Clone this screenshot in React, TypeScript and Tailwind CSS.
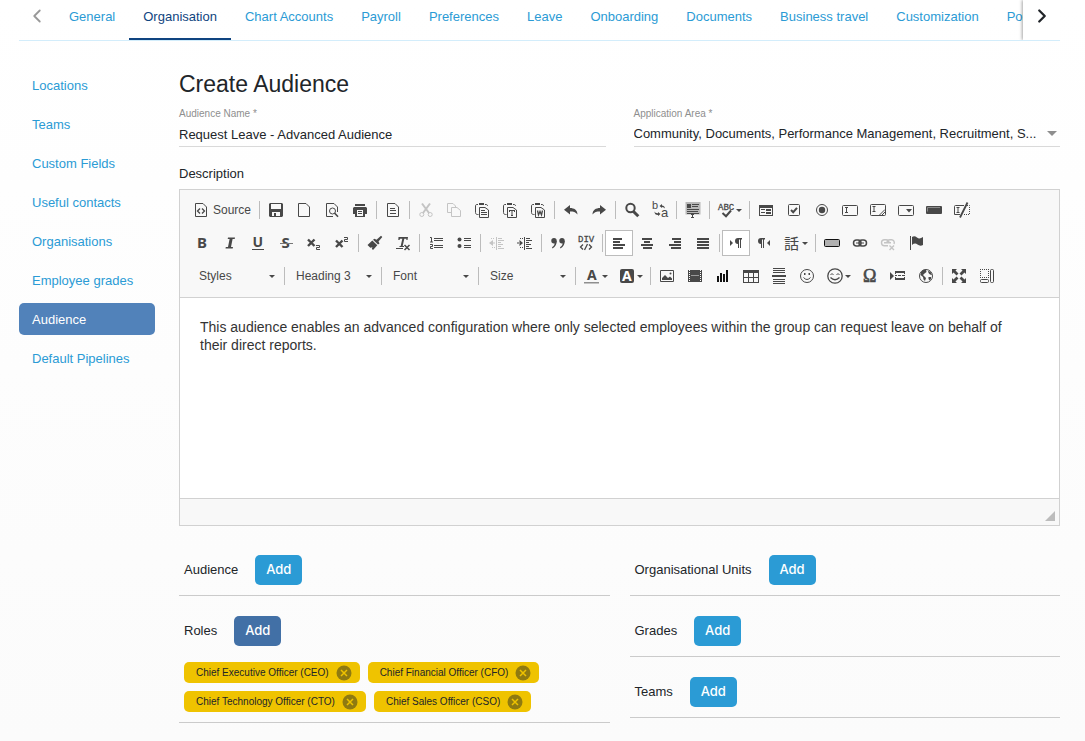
import React from 'react';
import { ChevronLeft, ChevronRight } from 'lucide-react';

const tabs = [
  'General',
  'Organisation',
  'Chart Accounts',
  'Payroll',
  'Preferences',
  'Leave',
  'Onboarding',
  'Documents',
  'Business travel',
  'Customization',
  'Policies',
];

const sideLinks = [
  'Locations',
  'Teams',
  'Custom Fields',
  'Useful contacts',
  'Organisations',
  'Employee grades',
  'Audience',
  'Default Pipelines',
];

const roles = [
  'Chief Executive Officer (CEO)',
  'Chief Financial Officer (CFO)',
  'Chief Technology Officer (CTO)',
  'Chief Sales Officer (CSO)',
];

const Page = () => <path d="M2.5 1.5H10L13.5 5V14.5H2.5Z" fill="none" stroke="currentColor" />;

const Clipboard = ({ children }: { children: React.ReactNode }) => (
  <>
    <path d="M4.5 12.5H3.5C2.5 12.5 1.5 12 1.5 10.5V4C1.5 3 2 2.5 3 2.5H4M11 2.5H12C13 2.5 13.5 3 13.5 4" fill="none" stroke="currentColor" />
    <path d="M5 1h5v2H5z" />
    <path d="M5.5 5.5H11L14.5 8V15.5H5.5Z" fill="none" stroke="currentColor" />
    {children}
  </>
);

const icons: Record<string, React.ReactNode> = {
  Source: (
    <>
      <Page />
      <path d="M7 6.5L4.5 9L7 11.5M9 6.5L11.5 9L9 11.5" fill="none" stroke="currentColor" strokeWidth="1.3" />
    </>
  ),
  Save: <path fillRule="evenodd" d="M2 1H14L15 2V14L14 15H2L1 14V2ZM3 2V7H13V2ZM4 10V14H6V11H8V14H12V10Z" />,
  'New page': <Page />,
  Preview: (
    <>
      <path d="M9 14.5H2.5V1.5H10L13.5 5V10" fill="none" stroke="currentColor" />
      <circle cx="8.5" cy="9" r="3" fill="none" stroke="currentColor" />
      <path d="M10.5 11L14 14.8" stroke="currentColor" strokeWidth="1.6" />
    </>
  ),
  Print: (
    <path fillRule="evenodd" d="M3 2H13V4H3ZM2 5H14L15 6V12H13V15H3V12H1V6ZM5 8V14H11V8ZM6 9H10V10H6ZM6 11H10V12H6Z" />
  ),
  Templates: (
    <>
      <Page />
      <path d="M5 6h5v1H5zM5 8h6v1H5zM5 11h6v1H5z" />
    </>
  ),
  Cut: (
    <g fill="none" stroke="currentColor">
      <path d="M4 1.5L11 11M12 1.5L5 11" strokeWidth="2" />
      <circle cx="3.8" cy="12.5" r="2" />
      <circle cx="12.2" cy="12.5" r="2" />
    </g>
  ),
  Copy: (
    <g fill="none" stroke="currentColor">
      <path d="M5 10.5H1.5V1.5H7L9.5 4V5" />
      <path d="M5.5 5.5H11L14.5 8.5V14.5H5.5Z" />
    </g>
  ),
  Paste: (
    <Clipboard>
      <path d="M7 8h4v1H7zM7 10h6v1H7zM7 12h6v1H7z" />
    </Clipboard>
  ),
  'Paste as plain text': (
    <Clipboard>
      <path d="M7 8h6v2h-1V9h-1.5v4h.5v1H9v-1h.5V9H8v1H7z" />
    </Clipboard>
  ),
  'Paste from Word': (
    <Clipboard>
      <path d="M7.5 8.5L8.5 13L10 9.5L11.5 13L12.5 8.5" fill="none" stroke="currentColor" strokeWidth="1.3" />
    </Clipboard>
  ),
  Undo: <path d="M7 3V6C11 6 14.5 8 14.5 12.5C12.5 10 10.5 9.5 7 9.5V12.5L1 7.7Z" />,
  Redo: <path d="M9 3V6C5 6 1.5 8 1.5 12.5C3.5 10 5.5 9.5 9 9.5V12.5L15 7.7Z" />,
  Find: (
    <g fill="none" stroke="currentColor">
      <circle cx="6.5" cy="6" r="4.2" strokeWidth="2" />
      <path d="M9.5 9.5L14.3 14.3" strokeWidth="3" />
    </g>
  ),
  Replace: (
    <>
      <text x="0" y="7" fontSize="11">b</text>
      <text x="9" y="15" fontSize="13">a</text>
      <path d="M7.5 4L10 2V3.5Q12.5 3.5 13 6.5Q12 5 10 5V6ZM8.5 12L6 10V11.3Q3 11.5 2.5 9.5Q2.5 13 6 13V14Z" />
    </>
  ),
  'Select all': (
    <>
      <path d="M.5 0H15.5V12.5H.5Z" fill="#b9b9b9" />
      <path d="M2 2h4v4H2zM7 2h7v1H7zM7 4h6v1H7zM2 7h12v1H2zM2 9h11v1H2zM2 11h12v1H2zM7 12h1v3H7zM6 12h3v1H6zM6 15h3v1H6z" />
    </>
  ),
  Spelling: (
    <>
      <text x="0" y="8" fontSize="9" fontFamily="Liberation Mono, monospace" stroke="currentColor" strokeWidth=".3">ABC</text>
      <path d="M4.5 11L8 14.2L13 8.5" fill="none" stroke="currentColor" strokeWidth="2" />
    </>
  ),
  Form: <path fillRule="evenodd" d="M1 3H15V14H1ZM2 6V13H14V6ZM3 7H7V8H3ZM8 7H13V9H8ZM3 10H7V11H3ZM8 10H13V12H8Z" />,
  Checkbox: (
    <>
      <rect x="2.5" y="2.5" width="11" height="11" rx="1" fill="none" stroke="currentColor" />
      <path d="M5 8L7.2 10.2L11 5.8" fill="none" stroke="currentColor" strokeWidth="2" />
    </>
  ),
  'Radio button': (
    <>
      <circle cx="8" cy="8" r="5.5" fill="none" stroke="currentColor" />
      <circle cx="8" cy="8" r="3.2" />
    </>
  ),
  'Text field': (
    <path d="M1.5 3.5Q.5 3.5 .5 4.5V12.5Q.5 13.5 1.5 13.5H14.5Q15.5 13.5 15.5 12.5V4.5Q15.5 3.5 14.5 3.5ZM3 5.5H6M3 10.5H6M4.5 5.5V10.5" fill="none" stroke="currentColor" />
  ),
  Textarea: (
    <path d="M1.5 2.5H14.5Q15.5 2.5 15.5 3.5V12.5Q15.5 13.5 14.5 13.5H1.5Q.5 13.5 .5 12.5V3.5Q.5 2.5 1.5 2.5ZM2.5 4.5H5.5M2.5 9.5H5.5M4 4.5V9.5M9.5 13L15 7.5M12 13L15 10" fill="none" stroke="currentColor" />
  ),
  'Selection field': (
    <>
      <rect x=".5" y="3.5" width="15" height="10" rx="1" fill="none" stroke="currentColor" />
      <path d="M8 7h6l-3 3.5z" />
    </>
  ),
  Button: (
    <>
      <rect x="0" y="4" width="16" height="8" rx="1" />
      <path d="M1.5 9.5V5.5H14" fill="none" stroke="#8a8a8a" />
    </>
  ),
  'Hidden field': (
    <g fill="none" stroke="currentColor">
      <path d="M10 3.5H1.5Q.5 3.5 .5 4.5V12.5H6M2.5 5.5H5.5M2.5 10.5H5.5M4 5.5V10.5" />
      <path d="M13 3.5H15.5V12.5H9" strokeDasharray="1 1" />
      <path d="M13.5 .5L6 15.5" strokeWidth="1.8" />
    </g>
  ),
  Bold: <text x="3" y="13" fontSize="15" fontWeight="700" fontFamily="Noto Sans, sans-serif">B</text>,
  Italic: <path d="M6 2.5H13L12.7 4H10.6L9 12H11L10.7 13.5H3.5L3.8 12H6L7.6 4H5.7Z" />,
  Underline: (
    <>
      <text x="2.5" y="12" fontSize="14" fontWeight="700" fontFamily="Noto Sans, sans-serif">U</text>
      <path d="M2 14h12v1H2z" />
    </>
  ),
  Strikethrough: (
    <>
      <text x="3.5" y="13" fontSize="15" fontWeight="700" fontFamily="Noto Sans, sans-serif">S</text>
      <path d="M2 8h13v1H2z" fill="#777" />
    </>
  ),
  Subscript: (
    <g fill="none" stroke="currentColor">
      <path d="M2 4.5L8.5 11M8.5 4.5L2 11" strokeWidth="2.4" />
      <path d="M10 10.5H13.5V12.5H10.5V14.5H14" />
    </g>
  ),
  Superscript: (
    <g fill="none" stroke="currentColor">
      <path d="M2 5.5L8.5 12M8.5 5.5L2 12" strokeWidth="2.4" />
      <path d="M10 2.5H13.5V4.5H10.5V6.5H14" />
    </g>
  ),
  'Copy formatting': (
    <path d="M14 .8L15.3 2.1L11.5 6.5L12.5 8.5L11 9.5L6 4.8L7.5 3.8L9.5 4.8ZM5.3 5.5L10.3 10.3L6 15L4.8 13.8L5.5 12.3L3.3 12.8L.5 10Z" />
  ),
  'Remove format': (
    <>
      <path d="M3.5 2H13L12.5 5H11.3L11.5 3.7H9.3L7.7 11H9V12H4.5V11H5.7L7.3 3.7H5L4.5 5H3.3Z" />
      <path d="M1 13h7v1H1z" />
      <path d="M9.5 10L14.5 15M14.5 10L9.5 15" fill="none" stroke="currentColor" strokeWidth="1.5" />
    </>
  ),
  'Numbered list': (
    <>
      <path d="M6 3h9v1H6zM6 5h9v1H6zM6 10h9v1H6zM6 12h9v1H6z" />
      <path d="M2 2.5H3.5V7M2 7H5M2 9.5H4.5V11.5H2.5V13.5H5" fill="none" stroke="currentColor" />
    </>
  ),
  'Bulleted list': (
    <>
      <circle cx="3.5" cy="4.5" r="2" />
      <circle cx="3.5" cy="11" r="2" />
      <path d="M8 3h7v1H8zM8 5h7v1H8zM8 10h7v1H8zM8 12h7v1H8z" />
    </>
  ),
  Outdent: (
    <>
      <path d="M7 2h1v13H7zM9 3h4v1H9zM9 5h6v1H9zM9 7h3v1H9zM9 9h5v1H9zM9 11h3v1H9zM9 13h6v1H9zM4 5v6L0 8zM4 7.5h2v1H4z" />
      <path d="M2 3.5H6M3 12.5H6" stroke="currentColor" strokeDasharray="1 1" />
    </>
  ),
  Indent: (
    <>
      <path d="M7 2h1v13H7zM9 3h4v1H9zM9 5h6v1H9zM9 7h3v1H9zM9 9h5v1H9zM9 11h3v1H9zM9 13h6v1H9zM2.5 5v6L6 8zM0 7.5h3v1H0z" />
      <path d="M3 3.5H6M3 12.5H6" stroke="currentColor" strokeDasharray="1 1" />
    </>
  ),
  'Block quote': (
    <>
      <circle cx="4" cy="5.7" r="2.7" />
      <circle cx="12" cy="5.7" r="2.7" />
      <path d="M6.7 5.5Q7 11 2.5 13.5L2 12.3Q5 10.5 4.5 7.5ZM14.7 5.5Q15 11 10.5 13.5L10 12.3Q13 10.5 12.5 7.5Z" />
    </>
  ),
  'Div container': (
    <>
      <text x="0" y="7" fontSize="9" fontFamily="Liberation Mono, monospace" stroke="currentColor" strokeWidth=".3">DIV</text>
      <path d="M5 9.5L2.5 12L5 14.5M11 9.5L13.5 12L11 14.5M9.5 9L6.5 15" fill="none" stroke="currentColor" strokeWidth="1.3" />
    </>
  ),
  'Align left': <path d="M2 3h9v2H2zM2 6h7v2H2zM2 9h12v2H2zM2 12h10v2H2z" />,
  Center: <path d="M3 3h10v2H3zM5 6h6v2H5zM2 9h12v2H2zM4 12h9v2H4z" />,
  'Align right': <path d="M5 3h9v2H5zM7 6h7v2H7zM2 9h12v2H2zM4 12h10v2H4z" />,
  Justify: <path d="M2 3h12v2H2zM2 6h12v2H2zM2 9h12v2H2zM2 12h12v2H2z" />,
  'Left to right': (
    <>
      <path d="M2 5L5 8L2 11Z" />
      <path d="M14 3V4.5H13V13H12V4.5H11V13H10V9Q7 9 7 6Q7 3 10 3Z" />
    </>
  ),
  'Right to left': (
    <>
      <path d="M14 5L11 8L14 11Z" />
      <path d="M9 3V4.5H8V13H7V4.5H6V13H5V9Q2 9 2 6Q2 3 5 3Z" />
    </>
  ),
  Language: <text x="0" y="14" fontSize="15" fontFamily="Noto Sans CJK JP, sans-serif">話</text>,
  'Image button': <rect x=".5" y="4.5" width="15" height="7" rx="1" fill="#b0b0b0" stroke="#111" />,
  Link: (
    <>
      <rect x="1.5" y="5" width="7.5" height="6" rx="3" fill="none" stroke="currentColor" strokeWidth="1.5" />
      <rect x="7" y="5" width="7.5" height="6" rx="3" fill="none" stroke="currentColor" strokeWidth="1.5" />
      <path d="M4 7.5h8v1H4z" />
    </>
  ),
  Unlink: (
    <g fill="none" stroke="currentColor" strokeWidth="1.4">
      <path d="M9 8A3 3 0 0 0 6 4.7H4.5A3 3 0 0 0 4.5 10.7H8M7 7.5A3 3 0 0 1 10 4.7H11.5A3 3 0 0 1 14 9M4 7.7H11" />
      <path d="M9.5 10.5L14 15M14 10.5L9.5 15" />
    </g>
  ),
  Anchor: <path d="M2 1h1v14H2zM4 2Q6.5 .5 9 2.5T15 2V10Q12 11.5 9.5 9.5T4 10Z" />,
  'Text color': (
    <>
      <text x="3" y="12" fontSize="14" fontWeight="700" fontFamily="Noto Sans, sans-serif">A</text>
      <path d="M0 14h15v1.5H0z" fill="#8f8f8f" />
    </>
  ),
  'Background color': (
    <>
      <rect x="1" y="1" width="14" height="14" rx="2" />
      <text x="3" y="13" fontSize="14" fontWeight="700" fill="#fff" fontFamily="Noto Sans, sans-serif">A</text>
    </>
  ),
  Image: (
    <>
      <path d="M1.5 2.5H14.5V13.5H1.5Z" fill="none" stroke="currentColor" />
      <path d="M3 12V10L6 7L9 10L11 8.5L13 10.5V12Z" />
      <circle cx="11.5" cy="5.5" r="1" />
    </>
  ),
  Flash: (
    <>
      <path d="M1 2h14v12H1z" />
      <path d="M2.5 2V14M13.5 2V14" stroke="#fff" strokeDasharray="1 1" />
      <path d="M4 7.5h8" stroke="#999" />
    </>
  ),
  Chart: <path fill="#111" d="M2 8h2v6H2zM5 5h2v9H5zM8 6h2v8H8zM11 2h2v12h-2z" />,
  Table: <path fillRule="evenodd" d="M0 2H16V15H0ZM1 5V9H5V5ZM6 5V9H10V5ZM11 5V9H15V5ZM1 10V14H5V10ZM6 10V14H10V10ZM11 10V14H15V10Z" />,
  'Horizontal line': <path d="M2 0h12v1H2zM2 2h12v1H2zM2 4h12v1H2zM1 7h14v2H1zM2 11h12v1H2zM2 13h12v1H2zM2 15h12v1H2z" />,
  Smiley: (
    <>
      <circle cx="8" cy="8" r="6.5" fill="none" stroke="currentColor" />
      <path d="M5 5h1.5v2H5zM9.5 5H11v2H9.5z" />
      <path d="M4.5 9.5Q8 13.5 11.5 9.5" fill="none" stroke="currentColor" />
    </>
  ),
  Emoji: (
    <g fill="none" stroke="currentColor">
      <circle cx="8" cy="8" r="7.2" strokeWidth="1.3" />
      <path d="M3.5 7L5 5.5L6.5 7M9.5 7L11 5.5L12.5 7" />
      <path d="M3.5 9.5Q8 14 12.5 9.5" strokeWidth="1.3" />
    </g>
  ),
  'Special character': <text x="1" y="14" fontSize="18" fontFamily="Liberation Serif, serif" stroke="currentColor" strokeWidth=".6">Ω</text>,
  'Page break': <path d="M0 4l4 4-4 4zM5 3h10v2H5zM5 7h2v1H5zM8 7h3v1H8zM12 7h3v1h-3zM5 10h10v2H5zM5 3h1v3H5zM14 3h1v3h-1zM5 9h1v2H5zM14 9h1v2h-1z" />,
  IFrame: (
    <>
      <circle cx="8" cy="8" r="6.5" fill="none" stroke="currentColor" />
      <path d="M3 4L5 2L8 1.5L8.5 4L6.5 5.5L5 7L6.5 8.5L8 10L7 13L5.500 11.500L5 9L2.5 7ZM10 2.5L13 4.5L14 7L12 6.5L10.5 5ZM10.500 9L13 9L13 11L11.500 12.500L10.500 11Z" />
    </>
  ),
  Maximize: (
    <>
      <path d="M1 1h5L1 6zM15 1v5l-5-5zM1 15v-5l5 5zM15 15h-5l5-5z" />
      <path d="M2 2L6.5 6.5M14 2L9.5 6.5M2 14L6.5 9.5M14 14L9.5 9.5" stroke="currentColor" strokeWidth="2.8" />
    </>
  ),
  'Show blocks': (
    <g fill="none" stroke="currentColor">
      <path d="M1 1.5H10M1 9.5H10M1.5 1V10M9.5 1V10" strokeDasharray="1 1" />
      <rect x="1.5" y="11.5" width="8" height="3" rx="1" />
      <rect x="11.5" y="1.5" width="3" height="13" rx="1" />
    </g>
  ),
};

const withArrow = ['Spelling', 'Language', 'Text color', 'Background color', 'Emoji'];
const disabled = ['Cut', 'Copy', 'Outdent', 'Unlink'];
const active = ['Align left', 'Left to right'];

const row1 = [
  ['Source'],
  ['Save', 'New page', 'Preview', 'Print'],
  ['Templates'],
  ['Cut', 'Copy', 'Paste', 'Paste as plain text', 'Paste from Word'],
  ['Undo', 'Redo'],
  ['Find', 'Replace'],
  ['Select all'],
  ['Spelling'],
  ['Form', 'Checkbox', 'Radio button', 'Text field', 'Textarea', 'Selection field', 'Button', 'Hidden field'],
];

const row2 = [
  ['Bold', 'Italic', 'Underline', 'Strikethrough', 'Subscript', 'Superscript'],
  ['Copy formatting', 'Remove format'],
  ['Numbered list', 'Bulleted list'],
  ['Outdent', 'Indent'],
  ['Block quote', 'Div container'],
  ['Align left', 'Center', 'Align right', 'Justify'],
  ['Left to right', 'Right to left', 'Language'],
  ['Image button', 'Link', 'Unlink', 'Anchor'],
];

const row3 = [
  ['Text color', 'Background color'],
  ['Image', 'Flash', 'Chart', 'Table', 'Horizontal line', 'Smiley', 'Emoji', 'Special character', 'Page break', 'IFrame'],
  ['Maximize', 'Show blocks'],
];

const Separator = () => <span className="mx-0.5 h-[18px] w-px shrink-0 bg-[#bcbcbc]" />;

const Arrow = () => (
  <svg viewBox="0 0 6 3" className="h-[3px] w-1.5 shrink-0" fill="currentColor">
    <path d="M0 0h6L3 3z" />
  </svg>
);

const ToolButton = ({ name }: { name: string }) => {
  let width = 'w-7 justify-center';
  if (withArrow.includes(name)) width = 'w-[35px] pl-1.5 gap-0.5';
  if (name === 'Source') width = 'w-[69px] pl-[5px] gap-1';
  return (
    <button
      type="button"
      aria-label={name}
      disabled={disabled.includes(name)}
      className={`flex h-[26px] shrink-0 items-center text-xs text-[#484848] disabled:text-[#c4c4c4] ${width} ${
        active.includes(name) ? 'bg-white outline-1 -outline-offset-1 outline-[#bcbcbc]' : ''
      }`}
    >
      <svg viewBox="0 0 16 16" className="size-4 shrink-0 overflow-visible" fill="currentColor">
        {icons[name]}
      </svg>
      {name === 'Source' && <span>Source</span>}
      {withArrow.includes(name) && <Arrow />}
    </button>
  );
};

const Groups = ({ groups }: { groups: string[][] }) => (
  <>
    {groups.map((group, i) => (
      <React.Fragment key={group[0]}>
        {i > 0 && <Separator />}
        {group.map((name) => (
          <ToolButton key={name} name={name} />
        ))}
      </React.Fragment>
    ))}
  </>
);

const Combo = ({ label }: { label: string }) => (
  <>
    <div className="relative w-[92px] shrink-0">
      <select aria-label={label} className="h-[26px] w-full appearance-none pl-[9px] text-xs text-[#484848] outline-none">
        <option>{label}</option>
      </select>
      <span className="pointer-events-none absolute inset-y-0 right-[7px] flex items-center text-[#484848]">
        <Arrow />
      </span>
    </div>
    <Separator />
  </>
);

const Editor = () => (
  <div className="border border-[#d1d1d1] bg-white">
    <div className="flex flex-col gap-[7px] overflow-hidden border-b border-[#d1d1d1] bg-[#f8f8f8] px-2 pt-[7px] pb-2">
      <div className="flex items-center">
        <Groups groups={row1} />
      </div>
      <div className="flex items-center">
        <Groups groups={row2} />
      </div>
      <div className="flex items-center pl-0.5">
        <Combo label="Styles" />
        <Combo label="Heading 3" />
        <Combo label="Font" />
        <Combo label="Size" />
        <Groups groups={row3} />
      </div>
    </div>
    <textarea
      id="description"
      className="block h-[200px] w-full resize-none py-5 pr-8 pl-5 text-sm leading-[18px] text-[#333] outline-none"
      defaultValue="This audience enables an advanced configuration where only selected employees within the group can request leave on behalf of their direct reports."
    />
    <div className="flex h-[27px] items-end justify-end border-t border-[#d1d1d1] bg-[#f8f8f8] p-1">
      <svg viewBox="0 0 10 10" className="size-2.5" fill="#bcbcbc">
        <path d="M10 0V10H0Z" />
      </svg>
    </div>
  </div>
);

const Section = ({ title, pressed, children }: { title: string; pressed?: boolean; children?: React.ReactNode }) => (
  <section className="mb-5 border-b border-[#cbcbcb] pb-2.5 pl-[5px]">
    <div className="flex items-center gap-[17px]">
      <h2>{title}</h2>
      <button
        type="button"
        className={`h-[30px] w-[47px] rounded-[5px] font-['Inter',sans-serif] font-medium text-white ${
          pressed ? 'bg-[#4270a6]' : 'bg-[#2b9bd5]'
        }`}
      >
        Add
      </button>
    </div>
    {children}
  </section>
);

const App = () => {
  return (
    <div className="min-h-screen bg-linear-to-b from-white to-[#fbfbfb] pr-[25px] pl-[19px] font-['Liberation_Sans',Arial,sans-serif] text-[13px] text-[#212529]">
      {/* Top tabs */}
      <nav className="flex h-[41px] items-stretch border-b border-[#d3edfb]">
        <button type="button" aria-label="Previous tabs" className="flex w-9 shrink-0 justify-center pt-[5px] text-[#999]">
          <ChevronLeft className="size-[22px]" />
        </button>
        <div className="flex min-w-0 flex-1 overflow-hidden">
          {tabs.map((tab) => (
            <a
              key={tab}
              href="#"
              className={`shrink-0 border-b-2 px-3.5 pt-[7px] leading-5 whitespace-nowrap ${
                tab === 'Organisation' ? 'border-[#0f4480] text-[#0f4480]' : 'border-transparent text-[#2b9bd5]'
              }`}
            >
              {tab}
            </a>
          ))}
        </div>
        <button
          type="button"
          aria-label="Next tabs"
          className="z-10 flex w-[37px] shrink-0 justify-center bg-white pt-[5px] shadow-[-1px_0_3px_rgba(0,0,0,0.35)] [clip-path:inset(0_0_0_-6px)]"
        >
          <ChevronRight className="size-[22px]" strokeWidth={2.5} />
        </button>
      </nav>

      <div className="flex gap-6 pt-7">
        {/* Settings menu */}
        <aside className="flex w-[136px] shrink-0 flex-col gap-[7px]">
          {sideLinks.map((link) => (
            <a
              key={link}
              href="#"
              className={`flex h-8 items-center rounded-[5px] pt-0.5 pl-[13px] whitespace-nowrap ${
                link === 'Audience' ? 'bg-[#5182ba] text-white' : 'text-[#2b9bd5]'
              }`}
            >
              {link}
            </a>
          ))}
        </aside>

        <main className="min-w-0 flex-1">
          <h1 className="text-[23px] leading-[30px]">Create Audience</h1>

          {/* Name and area */}
          <div className="mt-[7px] grid grid-cols-2 gap-7">
            <div className="border-b border-[#d9d9d9]">
              <label htmlFor="name" className="block text-[10px] leading-4 text-[#8e8e8e]">
                Audience Name *
              </label>
              <input
                id="name"
                defaultValue="Request Leave - Advanced Audience"
                className="block h-6 w-full outline-none"
              />
            </div>
            <div className="relative border-b border-[#d9d9d9]">
              <label htmlFor="area" className="block text-[10px] leading-4 text-[#8e8e8e]">
                Application Area *
              </label>
              <select id="area" className="block h-6 w-full appearance-none pr-5 outline-none">
                <option>Community, Documents, Performance Management, Recruitment, S...</option>
              </select>
              <svg viewBox="0 0 10 5" className="pointer-events-none absolute right-[3px] bottom-2.5 h-[5px] w-2.5" fill="#8e8e8e">
                <path d="M0 0h10L5 5z" />
              </svg>
            </div>
          </div>

          <label htmlFor="description" className="mt-[17px] mb-[5px] block leading-5">
            Description
          </label>
          <Editor />

          {/* Who belongs to the audience */}
          <div className="mt-[29px] grid grid-cols-2 gap-5">
            <div>
              <Section title="Audience" />
              <Section title="Roles" pressed>
                <ul className="mt-4 flex max-w-[400px] flex-wrap gap-2">
                  {roles.map((role) => (
                    <li key={role} className="flex h-[21px] items-center gap-[7px] rounded-[5px] bg-[#efc300] pr-2 pl-3 text-[10px]">
                      {role}
                      <button type="button" aria-label={`Remove ${role}`}>
                        <svg viewBox="0 0 16 16" className="size-4">
                          <circle cx="8" cy="8" r="7.5" fill="#8f7a10" />
                          <path d="M5 5L11 11M11 5L5 11" stroke="#efc300" strokeWidth="1.5" />
                        </svg>
                      </button>
                    </li>
                  ))}
                </ul>
              </Section>
            </div>
            <div>
              <Section title="Organisational Units" />
              <Section title="Grades" />
              <Section title="Teams" />
            </div>
          </div>
        </main>
      </div>
    </div>
  );
};

export default App;
